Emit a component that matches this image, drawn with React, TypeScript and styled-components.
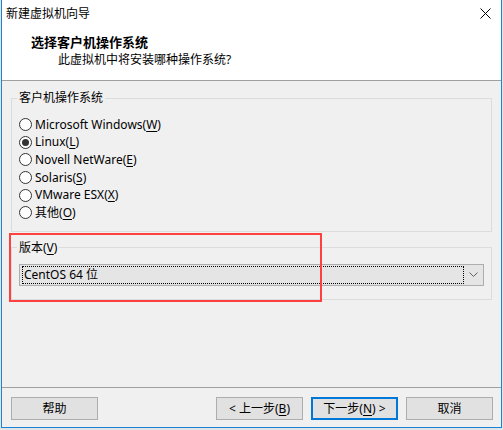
import styled, { createGlobalStyle } from 'styled-components';

const GlobalStyle = createGlobalStyle`
  html, body {
    margin: 0;
    padding: 0;
    background: #e4e4e4;
  }
  body {
    font-family: "Noto Sans", "Noto Sans CJK SC", sans-serif;
    font-size: 12px;
    color: #000;
  }
`;

const Window = styled.div`
  box-sizing: border-box;
  margin-left: 1px;
  width: 501px;
  height: 428px;
  display: flex;
  flex-direction: column;
  background: #f0f0f0;
  border: 1px solid #1883d7;
  border-top: none;
`;

const TitleBar = styled.div`
  height: 27px;
  display: flex;
  align-items: center;
  padding-left: 4px;
  padding-right: 10px;
  background: #fff;
  line-height: 16px;
`;

const TitleText = styled.span`
  flex: 1;
`;

const Header = styled.div`
  height: 54px;
  box-sizing: border-box;
  padding-top: 6px;
  background: #fff;
  display: flex;
  flex-direction: column;
  border-bottom: 1px solid #a0a0a0;
`;

const Heading = styled.div`
  margin-left: 29px;
  font-size: 13px;
  font-weight: bold;
  line-height: 18px;
`;

const SubHeading = styled.div`
  margin-left: 56px;
  margin-top: 1px;
  line-height: 16px;
`;

const Body = styled.div`
  position: relative;
  flex: 1;
  padding: 9px 9px 0;
`;

const Group = styled.fieldset<{ $gap?: number }>`
  margin: ${({ $gap }) => $gap ?? 0}px 0 0;
  padding: 0 7px;
  min-width: 0;
  border: 1px solid #dcdcdc;
`;

const Legend = styled.legend`
  padding: 0 2px;
  margin-left: -2px;
  line-height: 16px;
`;

const RadioList = styled.div`
  padding: 10px 0 9px;
  display: flex;
  flex-direction: column;
`;

const RadioRow = styled.label`
  height: 17.6px;
  display: flex;
  align-items: center;
  gap: 3px;
  line-height: 16px;
`;

const RadioCircle = styled.span<{ $checked?: boolean }>`
  box-sizing: border-box;
  width: 13px;
  height: 13px;
  border-radius: 50%;
  border: 1px solid #333;
  background: #fff;
  display: flex;
  align-items: center;
  justify-content: center;
  &::after {
    content: '';
    display: ${({ $checked }) => ($checked ? 'block' : 'none')};
    width: 7px;
    height: 7px;
    border-radius: 50%;
    background: #333;
  }
`;

const Key = styled.span`
  text-decoration: underline;
  text-underline-offset: 2px;
`;

const VersionBody = styled.div`
  padding: 8px 0 13px;
`;

const Combo = styled.div`
  box-sizing: border-box;
  height: 22px;
  display: flex;
  align-items: stretch;
  background: #e5e5e5;
  border: 1px solid #adadad;
  padding: 1px 0 1px 2px;
`;

const ComboValue = styled.div`
  flex: 1;
  display: flex;
  align-items: center;
  padding-left: 1px;
  border: 1px dotted #000;
  line-height: 16px;
`;

const ComboArrow = styled.div`
  width: 19px;
  display: flex;
  align-items: center;
  justify-content: center;
`;

const Annotation = styled.div`
  position: absolute;
  left: 7px;
  top: 152px;
  width: 313px;
  height: 69px;
  box-sizing: border-box;
  border: 2px solid #ff4040;
  pointer-events: none;
`;

const Footer = styled.div`
  border-top: 1px solid #a0a0a0;
  padding: 9px 8px 7px 9px;
  display: flex;
  gap: 8px;
`;

const Spacer = styled.div`
  flex: 1;
`;

const Button = styled.button<{ $default?: boolean }>`
  box-sizing: border-box;
  width: 87px;
  height: 23px;
  padding: 0;
  font: inherit;
  line-height: 16px;
  color: #000;
  background: #e1e1e1;
  border: ${({ $default }) => ($default ? '2px solid #0078d7' : '1px solid #adadad')};
`;

const radios: [string, string, boolean][] = [
  ['Microsoft Windows', 'W', false],
  ['Linux', 'L', true],
  ['Novell NetWare', 'E', false],
  ['Solaris', 'S', false],
  ['VMware ESX', 'X', false],
  ['其他', 'O', false],
];

export default function App() {
  return (
    <>
      <GlobalStyle />
      <Window>
        <TitleBar>
          <TitleText>新建虚拟机向导</TitleText>
          <svg width="11" height="11" viewBox="0 0 11 11">
            <path d="M0.5 0.5 L10.5 10.5 M10.5 0.5 L0.5 10.5" stroke="#000" strokeWidth="1" />
          </svg>
        </TitleBar>
        <Header>
          <Heading>选择客户机操作系统</Heading>
          <SubHeading>此虚拟机中将安装哪种操作系统?</SubHeading>
        </Header>
        <Body>
          <Group>
            <Legend>客户机操作系统</Legend>
            <RadioList>
              {radios.map(([name, key, checked]) => (
                <RadioRow key={key}>
                  <RadioCircle $checked={checked} />
                  <span>
                    {name}(<Key>{key}</Key>)
                  </span>
                </RadioRow>
              ))}
            </RadioList>
          </Group>
          <Group $gap={8}>
            <Legend>
              版本(<Key>V</Key>)
            </Legend>
            <VersionBody>
              <Combo>
                <ComboValue>CentOS 64 位</ComboValue>
                <ComboArrow>
                  <svg width="9" height="5" viewBox="0 0 9 5">
                    <path d="M0.5 0.5 L4.5 4.5 L8.5 0.5" stroke="#606060" strokeWidth="1" fill="none" />
                  </svg>
                </ComboArrow>
              </Combo>
            </VersionBody>
          </Group>
          <Annotation />
        </Body>
        <Footer>
          <Button>帮助</Button>
          <Spacer />
          <Button>
            &lt; 上一步(<Key>B</Key>)
          </Button>
          <Button $default>
            下一步(<Key>N</Key>) &gt;
          </Button>
          <Button>取消</Button>
        </Footer>
      </Window>
    </>
  );
}
